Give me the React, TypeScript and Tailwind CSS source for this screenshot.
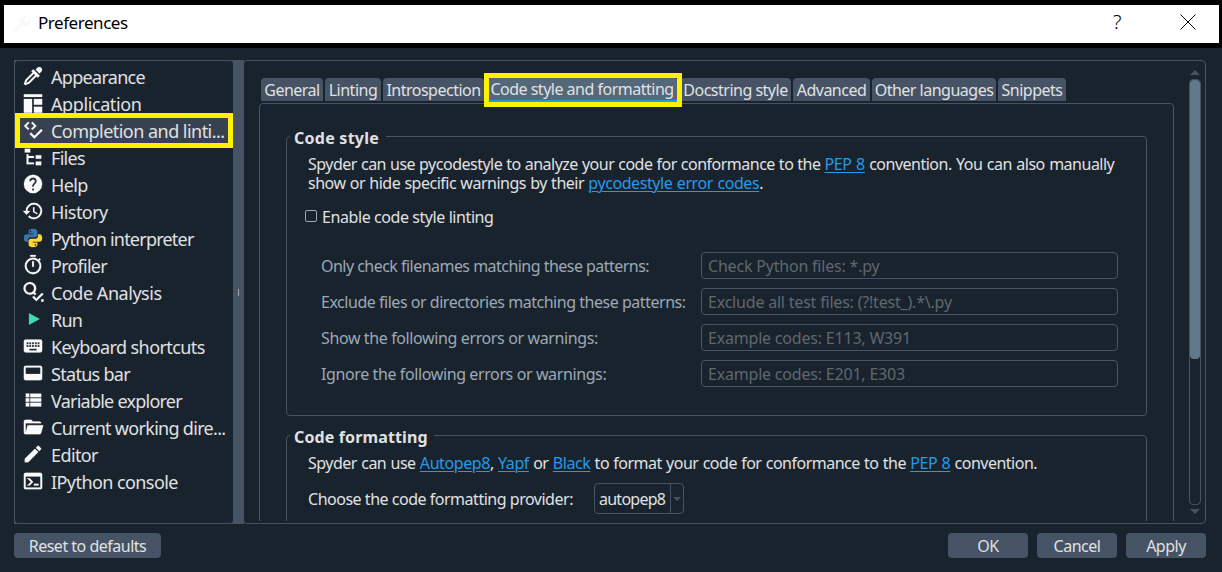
import type { ReactNode } from "react";

const ICONS = {
  eyedropper:
    "M19.35,11.72L17.22,13.85L15.81,12.43L8.1,20.14L3.5,22L2,20.5L3.86,15.9L11.57,8.19L10.15,6.78L12.28,4.65L19.35,11.72M16.76,3C17.93,1.83 19.83,1.83 21,3C22.17,4.17 22.17,6.07 21,7.24L19.08,9.16L14.84,4.92L16.76,3M5.56,17.03L4.5,19.5L6.97,18.44L14.4,11L13,9.6L5.56,17.03Z",
  layout: "M2,2.5H22V5.5H2ZM2,7.5H11V22.5H2ZM13,7.5H22V14H13ZM13,16H22V22.5H13Z",
  codeCheck:
    "M6.6,3L8,4.4L4.9,7.5L8,10.6L6.6,12L2.1,7.5ZM11.4,3L10,4.4L13.1,7.5L10,10.6L11.4,12L15.9,7.5ZM20.9,10.9L22.5,12.5L13.5,21.6L8.2,16.3L9.8,14.7L13.5,18.4Z",
  tree: "M3,3H9V7H3V3M15,10H21V14H15V10M15,17H21V21H15V17M13,13H7V18H13V20H7L5,20V9H7V11H13V13Z",
  help: "M15.07,11.25L14.17,12.17C13.45,12.89 13,13.5 13,15H11V14.5C11,13.39 11.45,12.39 12.17,11.67L13.41,10.41C13.78,10.05 14,9.55 14,9C14,7.89 13.1,7 12,7A2,2 0 0,0 10,9H8A4,4 0 0,1 12,5A4,4 0 0,1 16,9C16,9.88 15.64,10.67 15.07,11.25M13,19H11V17H13M12,2A10,10 0 0,0 2,12A10,10 0 0,0 12,22A10,10 0 0,0 22,12C22,6.47 17.5,2 12,2Z",
  history:
    "M13.5,8H12V13L16.28,15.54L17,14.33L13.5,12.25V8M13,3A9,9 0 0,0 4,12H1L4.96,16.03L9,12H6A7,7 0 0,1 13,5A7,7 0 0,1 20,12A7,7 0 0,1 13,19C11.07,19 9.32,18.21 8.06,16.94L6.64,18.36C8.27,20 10.5,21 13,21A9,9 0 0,0 22,12A9,9 0 0,0 13,3",
  timer:
    "M12,20A7,7 0 0,1 5,13A7,7 0 0,1 12,6A7,7 0 0,1 19,13A7,7 0 0,1 12,20M19.03,7.39L20.45,5.97C20,5.46 19.55,5 19.04,4.56L17.62,6C16.07,4.74 14.12,4 12,4A9,9 0 0,0 3,13A9,9 0 0,0 12,22C17,22 21,17.97 21,13C21,10.88 20.26,8.93 19.03,7.39M11,14H13V8H11M15,1H9V3H15V1Z",
  search:
    "M8.5,1A7,7 0 0,1 15.5,8C15.5,9.7 15,11.1 14,12.3L15.6,13.9L14,15.5L12.4,13.9A7,7 0 1,1 8.5,1M8.5,3.3A4.7,4.7 0 1,0 8.5,12.7A4.7,4.7 0 0,0 8.5,3.3M21.8,12.8L23.4,14.4L15.6,22.2L11.2,17.8L12.8,16.2L15.6,19ZM21,20H23.5V22.5H21Z",
  play: "M7.5,5.5V18.5L19.5,12Z",
  keyboard:
    "M19,10H17V8H19M19,13H17V11H19M16,10H14V8H16M16,13H14V11H16M16,17H8V15H16M7,10H5V8H7M7,13H5V11H7M8,11H10V13H8M8,8H10V10H8M11,11H13V13H11M11,8H13V10H11M20,5H4C2.89,5 2,5.89 2,7V17A2,2 0 0,0 4,19H20A2,2 0 0,0 22,17V7C22,5.89 21.1,5 20,5Z",
  dock: "M20,4H4A2,2 0 0,0 2,6V18A2,2 0 0,0 4,20H20A2,2 0 0,0 22,18V6A2,2 0 0,0 20,4M20,13H4V6H20Z",
  list: "M9,5V9H21V5M9,19H21V15H9M9,14H21V10H9M4,9H8V5H4M4,19H8V15H4M4,14H8V10H4V14Z",
  folder:
    "M19,20H4C2.89,20 2,19.1 2,18V6C2,4.89 2.89,4 4,4H10L12,6H19A2,2 0 0,1 21,8H21L4,8V18L6.14,10H23.21L20.93,18.5C20.7,19.37 19.92,20 19,20Z",
  pencil:
    "M20.71,7.04C21.1,6.65 21.1,6 20.71,5.63L18.37,3.29C18,2.9 17.35,2.9 16.96,3.29L15.12,5.12L18.87,8.87M3,17.25V21H6.75L17.81,9.93L14.06,6.18L3,17.25Z",
  console:
    "M20,19V7H4V19H20M20,3A2,2 0 0,1 22,5V19A2,2 0 0,1 20,21H4A2,2 0 0,1 2,19V5C2,3.89 2.9,3 4,3H20M13,17V15H18V17H13M9.58,13L5.57,9H8.4L11.7,12.3C12.09,12.69 12.09,13.33 11.7,13.72L8.42,17H5.59L9.58,13Z",
};

function Icon({ d, color = "fill-[#fafafa] stroke-[#fafafa]" }: { d: string; color?: string }) {
  return (
    <svg viewBox="0 0 24 24" className={`size-[22px] shrink-0 ${color}`} strokeWidth="0.2" fillRule="evenodd">
      <path d={d} />
    </svg>
  );
}

function PythonIcon() {
  return (
    <svg viewBox="0 0 24 24" className="size-[22px] shrink-0">
      <path
        className="fill-[#3776ab]"
        fillRule="evenodd"
        d="M11.9,2C8.8,2 7.1,3 7.1,4.7V7H12.2V7.8H4.8C3,7.8 2,9.5 2,12C2,14.6 3,16.2 4.8,16.2H6.6V13.8C6.6,12.3 7.8,11.2 9.3,11.2H14.3C15.7,11.2 16.8,10.1 16.8,8.8V4.7C16.8,3 14.9,2 11.9,2ZM9.3,3.6A.9,.9 0 1,1 9.3,5.4A.9,.9 0 0,1 9.3,3.6Z"
      />
      <path
        className="fill-[#ffd43b]"
        fillRule="evenodd"
        d="M12.1,22C15.2,22 16.9,21 16.9,19.3V17H11.8V16.2H19.2C21,16.2 22,14.5 22,12C22,9.4 21,7.8 19.2,7.8H17.4V10.2C17.4,11.7 16.2,12.8 14.7,12.8H9.7C8.3,12.8 7.2,13.9 7.2,15.2V19.3C7.2,21 9.1,22 12.1,22ZM14.7,20.4A.9,.9 0 1,1 14.7,18.6A.9,.9 0 0,1 14.7,20.4Z"
      />
    </svg>
  );
}

const SECTIONS: { label: string; icon: ReactNode; tracking: string; selected?: boolean }[] = [
  { label: "Appearance", icon: <Icon d={ICONS.eyedropper} />, tracking: "tracking-[-0.7px]" },
  { label: "Application", icon: <Icon d={ICONS.layout} />, tracking: "tracking-[-0.4px]" },
  { label: "Completion and linti...", icon: <Icon d={ICONS.codeCheck} />, tracking: "tracking-[-0.53px]", selected: true },
  { label: "Files", icon: <Icon d={ICONS.tree} />, tracking: "tracking-[-0.7px]" },
  { label: "Help", icon: <Icon d={ICONS.help} />, tracking: "tracking-[-0.6px]" },
  { label: "History", icon: <Icon d={ICONS.history} />, tracking: "tracking-[-0.57px]" },
  { label: "Python interpreter", icon: <PythonIcon />, tracking: "tracking-[-0.78px]" },
  { label: "Profiler", icon: <Icon d={ICONS.timer} />, tracking: "tracking-[-0.75px]" },
  { label: "Code Analysis", icon: <Icon d={ICONS.search} />, tracking: "tracking-[-0.46px]" },
  { label: "Run", icon: <Icon d={ICONS.play} color="fill-[#3ddbaf]" />, tracking: "tracking-[-0.8px]" },
  { label: "Keyboard shortcuts", icon: <Icon d={ICONS.keyboard} />, tracking: "tracking-[-0.6px]" },
  { label: "Status bar", icon: <Icon d={ICONS.dock} />, tracking: "tracking-[-0.7px]" },
  { label: "Variable explorer", icon: <Icon d={ICONS.list} />, tracking: "tracking-[-0.76px]" },
  { label: "Current working dire...", icon: <Icon d={ICONS.folder} />, tracking: "tracking-[-0.7px]" },
  { label: "Editor", icon: <Icon d={ICONS.pencil} />, tracking: "tracking-[-0.6px]" },
  { label: "IPython console", icon: <Icon d={ICONS.console} />, tracking: "tracking-[-0.57px]" },
];

const TABS = [
  { label: "General", width: "w-[62px]" },
  { label: "Linting", width: "w-[56px]" },
  { label: "Introspection", width: "w-[101px]" },
  { label: "Code style and formatting", width: "w-[192px]", selected: true },
  { label: "Docstring style", width: "w-[111px]" },
  { label: "Advanced", width: "w-[77px]" },
  { label: "Other languages", width: "w-[124px]" },
  { label: "Snippets", width: "w-[68px]" },
];

const FIELDS = [
  {
    label: "Only check filenames matching these patterns:",
    tracking: "tracking-[-0.53px]",
    hint: "Check Python files: *.py",
  },
  {
    label: "Exclude files or directories matching these patterns:",
    tracking: "tracking-[-0.47px]",
    hint: "Exclude all test files: (?!test_).*\\.py",
  },
  {
    label: "Show the following errors or warnings:",
    tracking: "tracking-[-0.38px]",
    hint: "Example codes: E113, W391",
  },
  {
    label: "Ignore the following errors or warnings:",
    tracking: "tracking-[-0.39px]",
    hint: "Example codes: E201, E303",
  },
];

function Link({ children }: { children: ReactNode }) {
  return (
    <a href="#" className="tracking-[-0.42px] text-[#259ae9] underline decoration-1 underline-offset-2">
      {children}
    </a>
  );
}

function Button({ children, width }: { children: ReactNode; width: string }) {
  return (
    <button className={`h-[25px] rounded-[4px] bg-[#455364] text-center leading-[26px] tracking-[-0.5px] whitespace-nowrap ${width}`}>
      {children}
    </button>
  );
}

function TitleBar() {
  return (
    <header className="h-12 bg-black pt-[5px] pr-[3px] pl-1">
      <div className="flex h-[38px] items-center bg-white pl-2 text-black">
        <svg viewBox="0 0 24 24" className="size-[19px] fill-[#f8f8f8]">
          <path d="M2,19.5L10.5,11A6,6 0 0,1 18.5,2.5L15,6L18,9L21.5,5.5A6,6 0 0,1 13,13.5L4.5,22Z" />
        </svg>
        <h1 className="-mt-[2px] ml-[7px] flex-1 text-[17px] tracking-[-0.45px]">Preferences</h1>
        <span className="-mt-1 w-[67px] text-[20px] font-light">?</span>
        <svg viewBox="0 0 16 16" className="mr-[23px] mb-1 size-4 fill-none stroke-black stroke-1">
          <path d="M0.5,0.5L15.5,15.5M15.5,0.5L0.5,15.5" />
        </svg>
      </div>
    </header>
  );
}

function Sidebar() {
  return (
    <div className="flex h-[464px] w-[230px] bg-[#455364]">
      <nav className="w-[220px] rounded-[4px] border border-[#455364] bg-[#19232d] pt-[3px] text-[18px]">
        {SECTIONS.map((s) => (
          <div key={s.label} className="relative flex h-[27px] items-center pl-[7px] whitespace-nowrap">
            {s.selected && <div className="absolute -top-[5px] right-0 left-0 h-[35px] border-[5px] border-[#fff200] bg-[#37414f]" />}
            <div className="relative mb-[3px] flex">{s.icon}</div>
            <span className={`relative ml-[7px] ${s.tracking}`}>{s.label}</span>
          </div>
        ))}
      </nav>
      <div className="flex flex-1 items-center pl-1">
        <div className="h-[7px] w-px bg-[#9da9b5]" />
      </div>
    </div>
  );
}

function Tabs() {
  return (
    <div className="flex h-[25px] gap-[2px] pl-[2px]">
      {TABS.map((t) => (
        <div
          key={t.label}
          className={`relative h-[23px] rounded-t-[4px] text-center tracking-[-0.5px] whitespace-nowrap ${t.width} ${t.selected ? "z-10 bg-[#54687a] leading-[23px]" : "bg-[#455364] leading-[25px]"}`}
        >
          {t.label}
          {t.selected && (
            <div className="absolute -top-[5px] -left-[2px] h-[34px] w-[198px] border-[5px] border-[#fff200]">
              <div className="mt-[22px] h-[2px] bg-[#259ae9]" />
            </div>
          )}
        </div>
      ))}
    </div>
  );
}

function ScrollBar() {
  return (
    <div className="flex w-3 flex-col items-center">
      <svg viewBox="0 0 10 5" className="mt-[9px] h-[5px] w-[10px] fill-[#455364]">
        <path d="M5,0L10,5H0Z" />
      </svg>
      <div className="mt-[4px] h-[426px] w-3 rounded-[4px] border border-[#455364]">
        <div className="h-[279px] rounded-[4px] bg-[#60798b]" />
      </div>
      <svg viewBox="0 0 10 5" className="mt-[4px] h-[5px] w-[10px] fill-[#455364]">
        <path d="M0,0H10L5,5Z" />
      </svg>
    </div>
  );
}

function CodeStyle() {
  return (
    <fieldset className="h-[292px] min-w-0 rounded-[4px] border border-[#455364] pl-[3px]">
      <legend className="h-6 w-[96px] pl-1 leading-[28px] font-bold tracking-[0.25px] whitespace-nowrap">Code style</legend>
      <div className="pt-[7px] pl-[18px]">
        <p className="leading-[19px] tracking-[-0.5px] whitespace-nowrap [word-spacing:0.75px]">
          <span className="[word-spacing:0.35px]">Spyder can use pycodestyle to analyze your code for conformance to the </span>
          <Link>PEP 8</Link> convention. You can also manually
          <br />
          <span className="[word-spacing:0.6px]">show or hide specific warnings by their </span>
          <Link>pycodestyle error codes</Link>.
        </p>
        <div className="mt-[14px] -ml-[3px] flex h-[20px] items-center gap-[5px]">
          <span className="mb-[2px] size-3 rounded-[2px] border border-[#9da9b5]" />
          <span className="tracking-[-0.42px]">Enable code style linting</span>
        </div>
        <div className="mt-[25px] ml-[13px] flex flex-col gap-[9px]">
          {FIELDS.map((f) => (
            <label key={f.label} className="flex h-[27px] items-center whitespace-nowrap text-[#9da9b5]">
              <span className={`w-[380px] ${f.tracking}`}>{f.label}</span>
              <input
                disabled
                placeholder={f.hint}
                className="h-[27px] w-[417px] rounded-[4px] border border-[#455364] bg-transparent pt-px pl-[6px] tracking-[-0.2px] placeholder:text-[#60676f] placeholder:opacity-100"
              />
            </label>
          ))}
        </div>
      </div>
    </fieldset>
  );
}

function CodeFormatting() {
  return (
    <fieldset className="mt-[7px] h-[200px] min-w-0 rounded-[4px] border border-[#455364] pl-[3px]">
      <legend className="h-6 w-[144px] pl-1 leading-[28px] font-bold tracking-[0.13px] whitespace-nowrap">Code formatting</legend>
      <div className="pt-[7px] pl-[18px]">
        <p className="leading-[19px] tracking-[-0.5px] whitespace-nowrap [word-spacing:0.6px]">
          Spyder can use <Link>Autopep8</Link>, <Link>Yapf</Link> or <Link>Black</Link> to format your code for conformance to the{" "}
          <Link>PEP 8</Link> convention.
        </p>
        <div className="mt-[10px] flex h-[31px] items-center whitespace-nowrap">
          <span className="w-[286px] tracking-[-0.48px]">Choose the code formatting provider:</span>
          <div className="flex h-[31px] w-[90px] items-center rounded-[4px] border border-[#455364]">
            <span className="w-[75px] pl-1 tracking-[-0.75px]">autopep8</span>
            <div className="flex h-full flex-1 items-center justify-center border-l border-[#455364]">
              <svg viewBox="0 0 8 4" className="h-1 w-2 fill-[#455364]">
                <path d="M0,0H8L4,4Z" />
              </svg>
            </div>
          </div>
        </div>
      </div>
    </fieldset>
  );
}

export default function App() {
  return (
    <div className="h-[572px] w-[1222px] overflow-hidden bg-[#19232d] font-['Noto_Sans','Open_Sans',sans-serif] text-[16px] text-[#e0e1e3]">
      <TitleBar />
      <main className="flex pt-3 pl-[14px]">
        <Sidebar />
        <section className="-ml-px flex h-[464px] w-[963px] rounded-[4px] border border-[#455364]">
          <div className="h-[460px] w-[930px] overflow-hidden pt-[17px] pl-[15px]">
            <Tabs />
            <div className="h-[600px] rounded-t-[4px] border border-[#455364] px-[26px] pt-[20px]">
              <CodeStyle />
              <CodeFormatting />
            </div>
          </div>
          <div className="ml-[15px]">
            <ScrollBar />
          </div>
        </section>
      </main>
      <footer className="flex gap-[9px] pt-[9px] pr-4 pl-[14px]">
        <Button width="w-[147px] mr-auto">Reset to defaults</Button>
        <Button width="w-[80px]">OK</Button>
        <Button width="w-[80px]">Cancel</Button>
        <Button width="w-[80px]">Apply</Button>
      </footer>
    </div>
  );
}
